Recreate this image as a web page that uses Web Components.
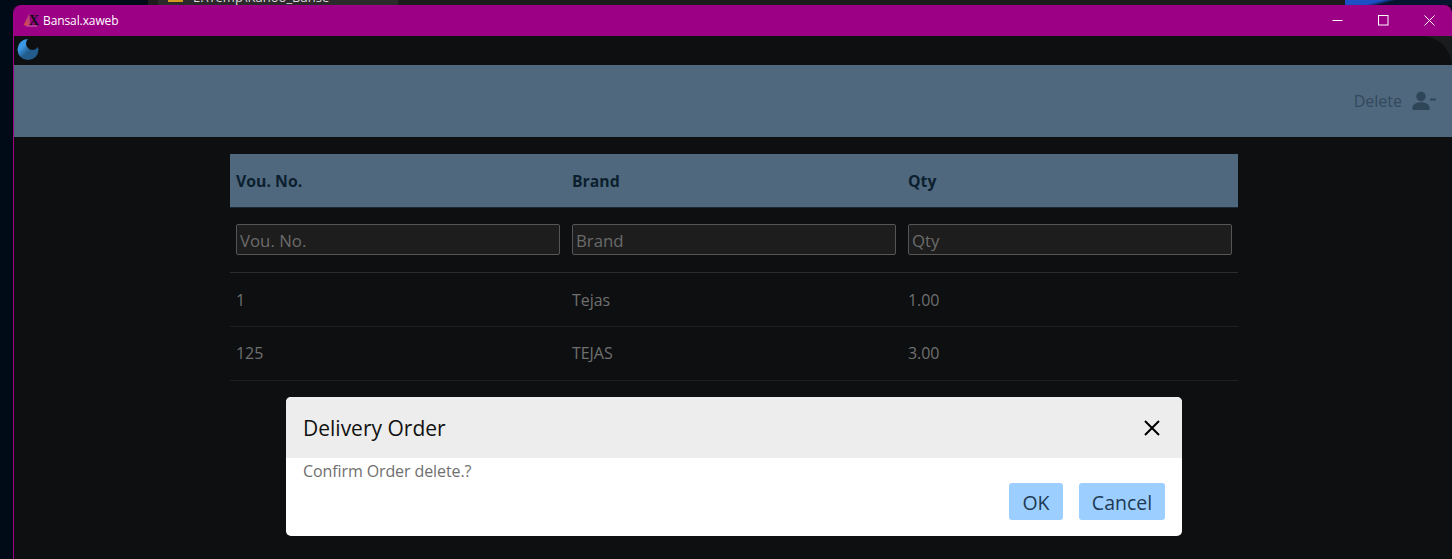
<!DOCTYPE html>
<html><head><meta charset="utf-8"><style>
html,body{margin:0;padding:0;width:1452px;height:559px;overflow:hidden;background:#020a16;font-family:"Open Sans","Noto Sans",sans-serif}
</style></head><body>
<x-desktop>
<x-window title="Bansal.xaweb">
  <x-appbar></x-appbar>
  <x-toolbar label="Delete"></x-toolbar>
  <x-grid></x-grid>
  <x-dialog heading="Delivery Order" message="Confirm Order delete.?"></x-dialog>
</x-window>
</x-desktop>
<script>
function def(name,html){customElements.define(name,class extends HTMLElement{connectedCallback(){if(this.shadowRoot)return;const r=this.attachShadow({mode:'open'});r.innerHTML=html(this);}});}
def('x-desktop',()=>`<style>
:host{display:block;width:1452px;height:559px;position:relative;overflow:hidden;background:#010b18}
.task{position:absolute;left:148px;top:0;width:1197px;height:5px;background:#1c1c1c}
.tab{position:absolute;left:10px;top:0;width:240px;height:5px;overflow:hidden;background:#2b2b2b;color:#ddd;font-size:13px;line-height:16px}
.tab i{position:absolute;left:10px;top:0;width:15px;height:2px;background:#d29a1e}
.tab span{position:absolute;left:35px;top:-11px;white-space:nowrap}
.blue{position:absolute;left:1345px;top:0;width:107px;height:5px;background:linear-gradient(165deg,#1c50c4 0,#1c50c4 30%,#06152e 42%,#06152e 100%)}
.win{position:absolute;left:13px;top:5px;right:0;bottom:0}
</style><div class="task"><div class="tab"><i></i><span>E:\\Temp\\Kanoo_Banse</span></div></div><div class="blue"></div><div class="win"><slot></slot></div>`);
def('x-window',h=>`<style>
:host{display:flex;flex-direction:column;height:100%;position:relative;background:#0e0f11;border-radius:8px 8px 0 0;overflow:hidden;border-left:1px solid #9c0085}
.bar{height:31px;flex:none;background:#9c0085;display:flex;align-items:center;color:#fff;font-size:12px;padding-left:9px}
.bar svg.logo{margin-right:5px;flex:none;overflow:visible}
.bar .t{flex:1;letter-spacing:-.1px}
.ctl{display:flex;height:100%}
.ctl div{width:46px;display:flex;align-items:center;justify-content:center}
</style>
<div class="bar">
<svg class="logo" width="15" height="15" viewBox="0 0 15 15"><defs><linearGradient id="t" x1="0" y1="1" x2="1" y2="0"><stop offset="0" stop-color="#e0503c"/><stop offset="1" stop-color="#a03c96"/></linearGradient></defs><path d="M0.500 12.500 L6.500 0 L7 12 Z" fill="url(#t)"/><path d="M3 13h11" stroke="#d070a8" stroke-width="1"/><text x="6" y="12" font-family="Liberation Serif" font-weight="700" font-size="14" fill="#111">X</text></svg>
<span class="t">${h.getAttribute('title')}</span>
<div class="ctl">
<div><svg width="11" height="11" viewBox="0 0 11 11"><path d="M0.500 5.500h10" stroke="#fff"/></svg></div>
<div><svg width="11" height="11" viewBox="0 0 11 11"><rect x=".5" y=".5" width="9.500" height="9.500" fill="none" stroke="#fff"/></svg></div>
<div><svg width="11" height="11" viewBox="0 0 11 11"><path d="M.5.5l10 10M10.500.5l-10 10" stroke="#fff" fill="none"/></svg></div>
</div></div><slot></slot>`);
def('x-appbar',()=>`<style>:host{display:flex;align-items:center;height:29px;flex:none;padding-left:3px;box-sizing:border-box;background:radial-gradient(circle 30px at calc(100% - 30px) 30px,#0e0f11 29.500px,#1a1b1d 30px) no-repeat right top/30px 30px #0e0f11}</style>
<svg width="22" height="22" viewBox="0 0 22 22" style="margin-top:-4px"><defs><linearGradient id="m" x1="0" y1="0" x2="1" y2="1"><stop offset=".3" stop-color="#3d98e4"/><stop offset=".55" stop-color="#225c8c"/></linearGradient></defs><circle cx="11" cy="11.500" r="10.500" fill="url(#m)"/><circle cx="15.500" cy="5.500" r="6.500" fill="#0e0f11"/></svg>`);
def('x-toolbar',h=>`<style>:host{display:flex;align-items:center;justify-content:flex-end;height:72px;flex:none;background:#4f687e;color:#34495c;font-size:16px;padding-right:15px}
svg{margin-left:10px}</style><span>${h.getAttribute('label')}</span>
<svg width="25" height="20" viewBox="0 0 25 20"><circle cx="9" cy="5.500" r="4.700" fill="#2f4558"/><path d="M0.500 19v-2.500c0-3.300 5-5.200 8.500-5.200s8.500 1.900 8.500 5.200V19z" fill="#2f4558"/><rect x="18" y="7.500" width="6" height="2" fill="#2f4558"/></svg>`);
def('x-grid',()=>{
const cols=['Vou. No.','Brand','Qty'],rows=[['1','Tejas','1.00'],['125','TEJAS','3.00']];
return `<style>
:host{display:block;margin:17px 0 0 216px;width:1008px;font-size:16px;color:#6f6f6f}
.row{display:grid;grid-template-columns:repeat(3,336px);align-items:center}
.row>div{padding:0 6px}
.head{height:53px;background:#4f687e;color:#0c1f2e;font-weight:700;font-size:15.800px;border-bottom:1px solid #1c2a38}
.filter{box-sizing:border-box;padding-bottom:2px;border-bottom:1px solid #2a2b2d;height:65px}
.body{height:53px;border-bottom:1px solid #1e1f21;letter-spacing:-.05px}
.body.last{box-sizing:border-box;height:54px;padding-bottom:2px}
input{box-sizing:border-box;width:100%;height:31px;display:block;background:#1d1d1d;border:1px solid #555;border-radius:2px;padding:2px 3px 0;font:inherit;font-size:16.800px;font-weight:400;color:#777;outline:none}
input::placeholder{color:#6b6b6b;opacity:1}
</style>
<div class="row head">${cols.map(c=>`<div>${c}</div>`).join('')}</div>
<div class="row filter">${cols.map(c=>`<div><input placeholder="${c}"></div>`).join('')}</div>
${rows.map((r,i)=>`<div class="row body${i?' last':''}">${r.map(c=>`<div>${c}</div>`).join('')}</div>`).join('')}`;});
def('x-dialog',h=>`<style>
:host{display:block;position:absolute;left:272px;top:392px;width:896px;height:139px;background:#fff;border-radius:5px;overflow:hidden;color:#6f6f6f}
.hd{height:61px;box-sizing:border-box;background:#ededed;display:flex;align-items:center;justify-content:space-between;padding:0 21px 0 17px;color:#111;font-size:21px}
.msg{padding-left:17px;font-size:16px;line-height:26px;letter-spacing:-.1px}
.acts{display:flex;justify-content:flex-end;gap:16px;padding:0 17px;margin-top:-1px}
.btn{height:37px;box-sizing:border-box;padding-top:2px;display:flex;align-items:center;justify-content:center;background:#9ccfff;border-radius:3px;color:#1d3a55;font-size:19.500px}
.ok{width:54px}.cancel{width:86px}
</style><div class="hd"><span>${h.getAttribute('heading')}</span><svg width="18" height="18" viewBox="0 0 18 18"><path d="M2 2l14 14M16 2L2 16" stroke="#000" stroke-width="2" fill="none"/></svg></div>
<div class="msg">${h.getAttribute('message')}</div>
<div class="acts"><div class="btn ok">OK</div><div class="btn cancel">Cancel</div></div>`);
</script></body></html>
